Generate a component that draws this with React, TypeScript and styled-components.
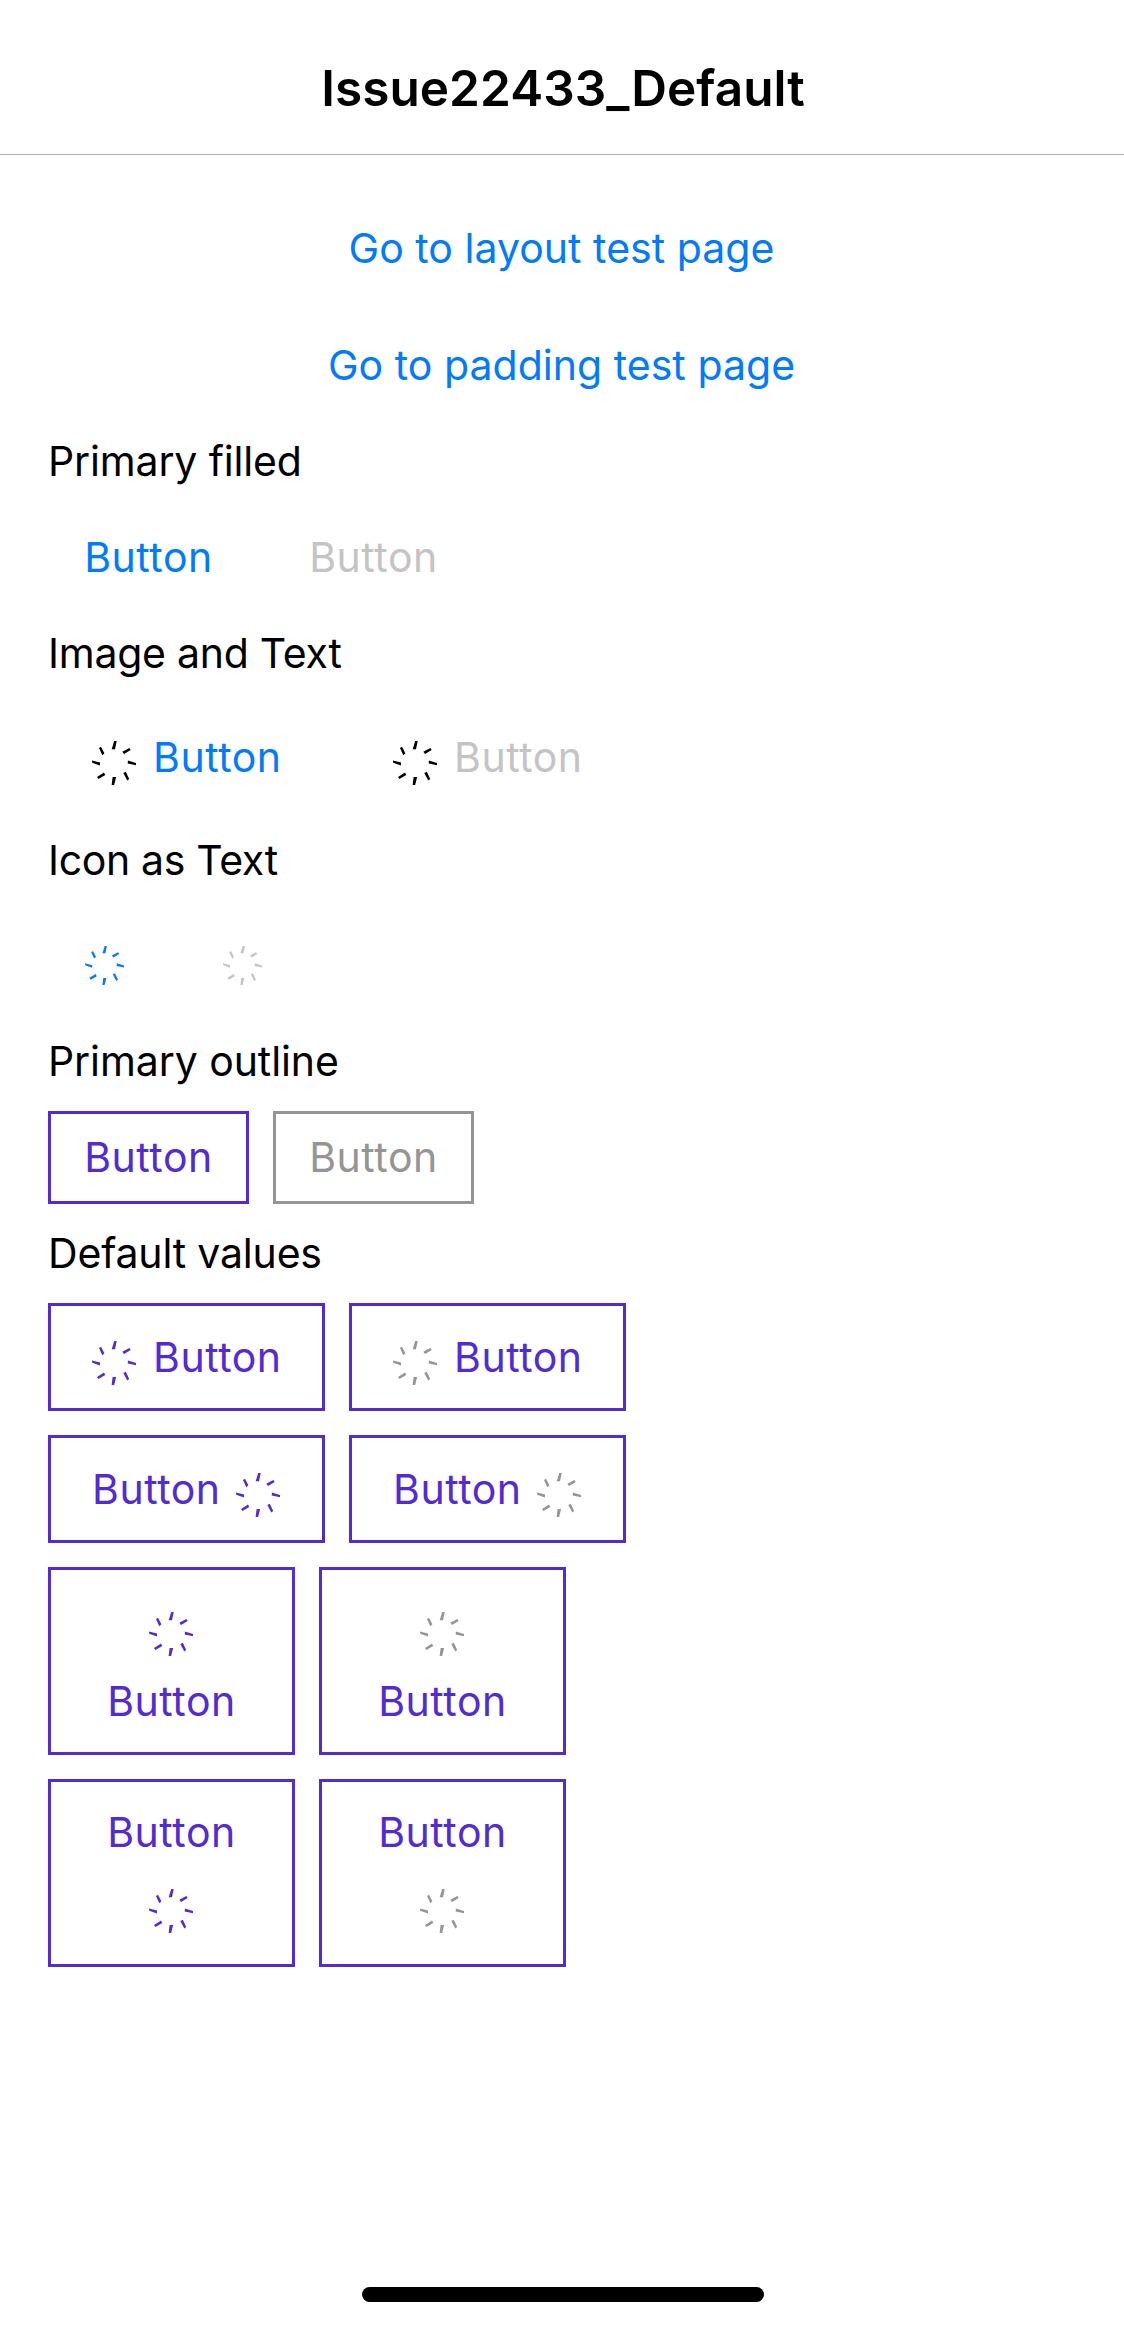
import React from "react";
import styled, { createGlobalStyle } from "styled-components";

const colors = {
  link: "#007aff",
  primary: "#512bd4",
  disabled: "#c4c4c4",
  outlineDisabled: "#959595",
  text: "#000000",
};

const GlobalStyle = createGlobalStyle`
  * { box-sizing: border-box; }
  body {
    margin: 0;
    background: #ffffff;
    font-family: Inter, "Liberation Sans", sans-serif;
  }
`;

const Page = styled.div`
  display: flex;
  flex-direction: column;
  width: 1124px;
  height: 2326px;
  background: #ffffff;
  overflow: hidden;
`;

const Header = styled.header`
  display: flex;
  justify-content: center;
  height: 155px;
  padding: 57px 0 0 2px;
  border-bottom: 1px solid #b2b2b2;
`;

const Title = styled.h1`
  margin: 0;
  font-size: 49.5px;
  font-weight: 600;
  line-height: 62px;
  letter-spacing: 0.05px;
  white-space: nowrap;
`;

const Content = styled.main`
  display: flex;
  flex: 1;
  flex-direction: column;
  gap: 24px;
  padding: 47px 48px 0;
`;

const Label = styled.h2<{ $spacing: number }>`
  margin: 0;
  font-size: 41px;
  font-weight: 400;
  line-height: 51px;
  letter-spacing: ${(p) => p.$spacing}px;
  color: ${colors.text};
  white-space: nowrap;
`;

const Row = styled.div`
  display: flex;
  gap: 24px;
`;

const BaseButton = styled.button<{ $color: string; $border?: string }>`
  display: flex;
  justify-content: center;
  margin: 0;
  padding: 0;
  border: 3px solid ${(p) => p.$border ?? "transparent"};
  background: transparent;
  color: ${(p) => p.$color};
  font-family: inherit;
  font-size: 41px;
  line-height: 51px;
  letter-spacing: 0.55px;
  white-space: nowrap;
`;

const LinkButton = styled(BaseButton)`
  height: 93px;
  padding: 18px 1px 0 0;
  letter-spacing: 0.03px;
`;

const TextButton = styled(BaseButton)`
  width: 201px;
  height: 93px;
  padding-top: 18px;
`;

const IconButton = styled(BaseButton)`
  justify-content: flex-start;
  width: 114px;
  height: 102px;
  padding: 33px 0 0 34px;
`;

const InlineButton = styled(BaseButton)<{ $trailing?: boolean }>`
  flex-direction: ${(p) => (p.$trailing ? "row-reverse" : "row")};
  justify-content: ${(p) => (p.$trailing ? "flex-end" : "flex-start")};
  gap: ${(p) => (p.$trailing ? 15 : 17)}px;
  width: 277px;
  height: 108px;
  padding: 26px 0 0 41px;

  svg {
    margin-top: 9px;
  }
`;

const StackedButton = styled(BaseButton)<{ $bottom?: boolean }>`
  flex-direction: ${(p) => (p.$bottom ? "column-reverse" : "column")};
  justify-content: ${(p) => (p.$bottom ? "flex-end" : "flex-start")};
  align-items: center;
  gap: ${(p) => (p.$bottom ? 31 : 20)}px;
  width: 247px;
  height: 188px;
  padding-top: ${(p) => (p.$bottom ? 25 : 42)}px;

  svg {
    margin-right: 1px;
  }
`;

const SpinnerSvg = styled.svg<{ $color: string }>`
  display: block;
  flex: none;
  fill: ${(p) => p.$color};
`;

const HomeIndicator = styled.div`
  align-self: center;
  width: 402px;
  height: 15px;
  margin: 0 0 24px 2px;
  border-radius: 7.5px;
  background: #000000;
`;

const spokes = [
  "19.7,8.2 23,8.2 24.7,0 22.2,0",
  "30.3,10.7 32,13 38.7,9 37.3,7",
  "35.9,19.6 35.7,22.5 44,24.3 44,22",
  "31.3,32 33.8,30.7 37.2,38 35.3,39.6",
  "20.6,36 24.1,36 22.1,44 19.6,44",
  "5,35.9 6.4,38 13.3,34 12,31.5",
  "0,19.4 8.1,21.6 7.9,24.4 0.2,21.8",
  "7,7 9,5.7 12.4,12.3 10.3,14.2",
];

function Spinner({ color, size = 44 }: { color: string; size?: number }) {
  return (
    <SpinnerSvg $color={color} width={size} height={size} viewBox="0 0 44 44" aria-hidden="true">
      {spokes.map((points) => (
        <polygon key={points} points={points} />
      ))}
    </SpinnerSvg>
  );
}

export default function App() {
  return (
    <>
      <GlobalStyle />
      <Page>
        <Header>
          <Title>Issue22433_Default</Title>
        </Header>
        <Content>
          <LinkButton $color={colors.link}>Go to layout test page</LinkButton>
          <LinkButton $color={colors.link}>Go to padding test page</LinkButton>

          <Label $spacing={-0.14}>Primary filled</Label>
          <Row>
            <TextButton $color={colors.link}>Button</TextButton>
            <TextButton $color={colors.disabled}>Button</TextButton>
          </Row>

          <Label $spacing={-0.26}>Image and Text</Label>
          <Row>
            {[colors.link, colors.disabled].map((color) => (
              <InlineButton key={color} $color={color}>
                <Spinner color="#000000" />
                <span>Button</span>
              </InlineButton>
            ))}
          </Row>

          <Label $spacing={-0.34}>Icon as Text</Label>
          <Row>
            {[colors.link, colors.disabled].map((color) => (
              <IconButton key={color} $color={color}>
                <Spinner color={color} size={39} />
              </IconButton>
            ))}
          </Row>

          <Label $spacing={-0.08}>Primary outline</Label>
          <Row>
            <TextButton $color={colors.primary} $border={colors.primary}>Button</TextButton>
            <TextButton $color={colors.outlineDisabled} $border={colors.outlineDisabled}>Button</TextButton>
          </Row>

          <Label $spacing={-0.18}>Default values</Label>
          {[false, true].map((trailing) => (
            <Row key={String(trailing)}>
              {[colors.primary, colors.outlineDisabled].map((icon) => (
                <InlineButton key={icon} $color={colors.primary} $border={colors.primary} $trailing={trailing}>
                  <Spinner color={icon} />
                  <span>Button</span>
                </InlineButton>
              ))}
            </Row>
          ))}
          {[false, true].map((bottom) => (
            <Row key={String(bottom)}>
              {[colors.primary, colors.outlineDisabled].map((icon) => (
                <StackedButton key={icon} $color={colors.primary} $border={colors.primary} $bottom={bottom}>
                  <Spinner color={icon} />
                  <span>Button</span>
                </StackedButton>
              ))}
            </Row>
          ))}
        </Content>
        <HomeIndicator />
      </Page>
    </>
  );
}
